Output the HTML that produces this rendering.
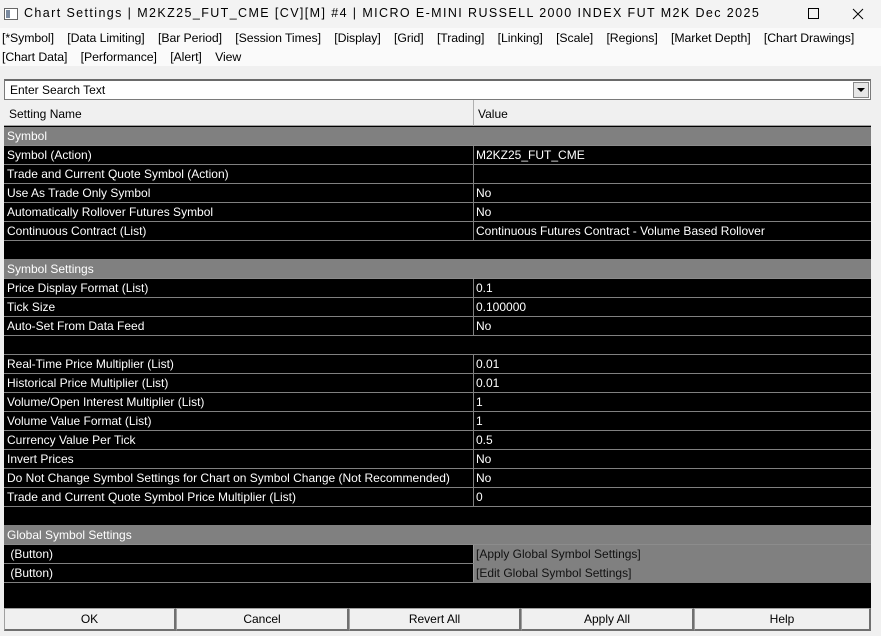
<!DOCTYPE html>
<html><head><style>
*{box-sizing:border-box;margin:0;padding:0}
body{width:881px;height:636px;background:#f0f0f0;font-family:"Liberation Sans",sans-serif;font-size:12px;position:relative;overflow:hidden;color:#000}
.title{position:absolute;left:0;top:0;width:881px;height:28px;background:#f3f3f3;}
.title .t{position:absolute;left:24px;top:6px;font-size:12.5px;letter-spacing:1.4px;white-space:nowrap}
.tabs{position:absolute;left:0;top:28px;width:881px;height:38px;background:#fafafa}
.tabs div{position:absolute;left:2px;font-size:12.3px;white-space:nowrap;letter-spacing:-0.08px}
.search{position:absolute;left:4px;top:79px;width:867px;height:21px;background:#fff;border:1px solid #7a7a7a;border-top:2px solid #6a6a6a}
.search span{position:absolute;left:5px;top:2px}
.dd{position:absolute;right:1px;top:1px;width:16px;height:16px;background:#e6e6e6;border:1px solid #888}
.grid{position:absolute;left:4px;top:100px;width:867px;height:508px;background:#000}
.hdr{position:absolute;left:0;top:0;width:867px;height:26px;background:#f0f0f0;border-bottom:1px solid #a0a0a0}
.hdr span{position:absolute;top:7px}
.row{position:absolute;left:0;width:867px;height:19px;border-bottom:1px solid #808080;color:#fff}
.row span{position:absolute;top:2px;white-space:nowrap}
.row .n{left:3px}.row .v{left:472px}
.g{background:#808080;border-bottom:1px solid #8c8c8c}
.b .vc{position:absolute;left:469px;top:0;width:398px;height:18px;background:#808080;border-left:1px solid #999}
.b span.v{color:#111}
.vl{position:absolute;left:469px;width:1px;background:#808080}
.btns{position:absolute;left:4px;top:608px;width:867px;height:23px}
.btn{position:absolute;top:0;height:23px;background:#f0f0f0;border:1px solid #a0a0a0;border-right:2px solid #707070;border-bottom:2px solid #707070;text-align:center;line-height:21px}
</style></head><body>
<div class="title">
<svg style="position:absolute;left:4px;top:8px" width="14" height="12"><rect x="0.5" y="0.5" width="13" height="11" fill="#fff" stroke="#666"/><rect x="2" y="2" width="4" height="8" fill="#7a8aa0"/></svg>
<span class="t">Chart Settings | M2KZ25_FUT_CME [CV][M] #4 | MICRO E-MINI RUSSELL 2000 INDEX FUT M2K Dec 2025</span>
<svg style="position:absolute;left:760px;top:8px" width="110" height="12"><rect x="48.5" y="0.5" width="10" height="10" fill="none" stroke="#000"/><path d="M93 1 L103 11 M103 1 L93 11" stroke="#000"/></svg>
</div>
<div class="tabs">
<div style="top:3px">[*Symbol]&nbsp;&nbsp;&nbsp; [Data Limiting]&nbsp;&nbsp;&nbsp; [Bar Period]&nbsp;&nbsp;&nbsp; [Session Times]&nbsp;&nbsp;&nbsp; [Display]&nbsp;&nbsp;&nbsp; [Grid]&nbsp;&nbsp;&nbsp; [Trading]&nbsp;&nbsp;&nbsp; [Linking]&nbsp;&nbsp;&nbsp; [Scale]&nbsp;&nbsp;&nbsp; [Regions]&nbsp;&nbsp;&nbsp; [Market Depth]&nbsp;&nbsp;&nbsp; [Chart Drawings]</div>
<div style="top:22px">[Chart Data]&nbsp;&nbsp;&nbsp; [Performance]&nbsp;&nbsp;&nbsp; [Alert]&nbsp;&nbsp;&nbsp; View</div>
</div>
<div class="search"><span>Enter Search Text</span><div class="dd"><svg width="14" height="14"><path d="M3 5 L11 5 L7 9Z" fill="#000"/></svg></div></div>
<div class="grid">
<div class="hdr"><span style="left:5px">Setting Name</span><span style="left:474px">Value</span><div style="position:absolute;left:469px;top:0;width:1px;height:26px;background:#b0b0b0"></div></div>
<div class="vl" style="top:46px;height:95px"></div>
<div class="vl" style="top:179px;height:57px"></div>
<div class="vl" style="top:255px;height:152px"></div>
<div class="row g" style="top:27px"><span class="n">Symbol</span></div>
<div class="row" style="top:46px"><span class="n">Symbol (Action)</span><span class="v">M2KZ25_FUT_CME</span></div>
<div class="row" style="top:65px"><span class="n">Trade and Current Quote Symbol (Action)</span></div>
<div class="row" style="top:84px"><span class="n">Use As Trade Only Symbol</span><span class="v">No</span></div>
<div class="row" style="top:103px"><span class="n">Automatically Rollover Futures Symbol</span><span class="v">No</span></div>
<div class="row" style="top:122px"><span class="n">Continuous Contract (List)</span><span class="v">Continuous Futures Contract - Volume Based Rollover</span></div>
<div class="row" style="top:141px"></div>
<div class="row g" style="top:160px"><span class="n">Symbol Settings</span></div>
<div class="row" style="top:179px"><span class="n">Price Display Format (List)</span><span class="v">0.1</span></div>
<div class="row" style="top:198px"><span class="n">Tick Size</span><span class="v">0.100000</span></div>
<div class="row" style="top:217px"><span class="n">Auto-Set From Data Feed</span><span class="v">No</span></div>
<div class="row" style="top:236px"></div>
<div class="row" style="top:255px"><span class="n">Real-Time Price Multiplier (List)</span><span class="v">0.01</span></div>
<div class="row" style="top:274px"><span class="n">Historical Price Multiplier (List)</span><span class="v">0.01</span></div>
<div class="row" style="top:293px"><span class="n">Volume/Open Interest Multiplier (List)</span><span class="v">1</span></div>
<div class="row" style="top:312px"><span class="n">Volume Value Format (List)</span><span class="v">1</span></div>
<div class="row" style="top:331px"><span class="n">Currency Value Per Tick</span><span class="v">0.5</span></div>
<div class="row" style="top:350px"><span class="n">Invert Prices</span><span class="v">No</span></div>
<div class="row" style="top:369px"><span class="n">Do Not Change Symbol Settings for Chart on Symbol Change (Not Recommended)</span><span class="v">No</span></div>
<div class="row" style="top:388px"><span class="n">Trade and Current Quote Symbol Price Multiplier (List)</span><span class="v">0</span></div>
<div class="row" style="top:407px"></div>
<div class="row g" style="top:426px"><span class="n">Global Symbol Settings</span></div>
<div class="row b" style="top:445px"><div class="vc"></div><span class="n">&nbsp;(Button)</span><span class="v">[Apply Global Symbol Settings]</span></div>
<div class="row b" style="top:464px"><div class="vc"></div><span class="n">&nbsp;(Button)</span><span class="v">[Edit Global Symbol Settings]</span></div>
</div>
<div class="btns">
<div class="btn" style="left:0;width:172px">OK</div>
<div class="btn" style="left:172px;width:173px">Cancel</div>
<div class="btn" style="left:345px;width:172px">Revert All</div>
<div class="btn" style="left:517px;width:173px">Apply All</div>
<div class="btn" style="left:690px;width:177px">Help</div>
</div>
</body></html>
